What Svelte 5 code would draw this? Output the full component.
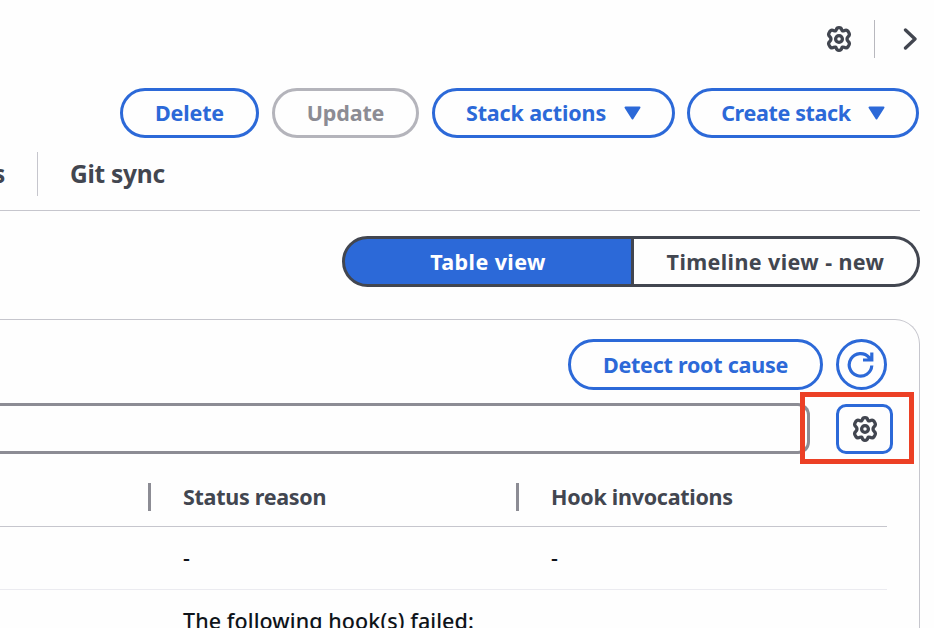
<script>
  const rows = [
    { reason: '-', hooks: '-' },
    { reason: 'The following hook(s) failed:', hooks: '' }
  ];

  let view = $state('table');
</script>

{#snippet gearIcon()}
  <svg class="gear" viewBox="0 0 26 26" aria-hidden="true">
    <path d="M10.300 3.800Q10.700 1.700 13 1.700T15.700 3.800Q16.200 5.500 18 4.700Q20.700 3.300 22 5.200L23 7Q24 9 22.300 10.500Q21 11.700 21 13T22.300 15.500Q24 17 23 19L22 20.800Q20.700 22.700 18 21.300Q16.200 20.500 15.700 22.200Q15.300 24.300 13 24.300T10.300 22.200Q9.800 20.500 8 21.300Q5.300 22.700 4 20.800L3 19Q2 17 3.700 15.500Q5 14.300 5 13T3.700 10.500Q2 9 3 7L4 5.200Q5.300 3.300 8 4.700Q9.800 5.500 10.300 3.800Z" />
    <circle cx="13" cy="13" r="3.400" />
  </svg>
{/snippet}

{#snippet caret()}
  <svg class="caret" viewBox="0 0 17 14" aria-hidden="true">
    <path d="M1.500 1.500h14l-7 11z" />
  </svg>
{/snippet}

<main>
  <header class="toolbar">
    <button class="icon-btn" aria-label="Preferences">{@render gearIcon()}</button>
    <span class="rule"></span>
    <button class="icon-btn next" aria-label="Next">
      <svg viewBox="0 0 14 22" aria-hidden="true"><path d="M2.500 2l9.500 9-9.500 9" /></svg>
    </button>
  </header>

  <div class="actions">
    <button class="btn delete">Delete</button>
    <button class="btn update" disabled>Update</button>
    <button class="btn stack"><span>Stack actions</span>{@render caret()}</button>
    <button class="btn create"><span>Create stack</span>{@render caret()}</button>
  </div>

  <nav class="tabs">
    <a class="prev-tab" href="#events">s</a>
    <a class="git" href="#git">Git sync</a>
  </nav>

  <div class="segments">
    <button class:active={view === 'table'} onclick={() => (view = 'table')}>Table view</button>
    <button class:active={view === 'timeline'} onclick={() => (view = 'timeline')}>
      Timeline view - new
    </button>
  </div>

  <section class="panel">
    <div class="panel-head">
      <button class="btn detect">Detect root cause</button>
      <button class="btn refresh" aria-label="Refresh">
        <svg viewBox="0 0 28 28" aria-hidden="true">
          <path d="M24.800 14.500A11.300 11.300 0 1 1 22 6.400L24.500 9M24.800 1.500V9H16" />
        </svg>
      </button>
    </div>

    <div class="filter-row">
      <input class="filter" aria-label="Search events" />
      <button class="settings" aria-label="Table settings">{@render gearIcon()}</button>
      <span class="highlight"></span>
    </div>

    <div class="table">
      <div class="row head">
        <span class="lead"></span>
        <span class="cell">Status reason</span>
        <span class="cell hooks">Hook invocations</span>
      </div>
      {#each rows as row}
        <div class="row">
          <span class="lead"></span>
          <span class="cell">{row.reason}</span>
          <span class="cell">{row.hooks}</span>
        </div>
      {/each}
    </div>
  </section>
</main>

<style>
  :global(body) {
    background: #fff;
    overflow: hidden;
  }

  main {
    --blue: #2c69d8;
    --dark: #424650;
    --grey: #8c8c94;
    --line: #c6c6cd;
    box-sizing: border-box;
    width: 934px;
    height: 628px;
    padding-right: 14px;
    overflow: hidden;
    background: #fefefe;
    color: #0f141a;
    font: 21.5px/28px 'Noto Sans', 'Open Sans', sans-serif;
  }
  main * { box-sizing: border-box; }

  button {
    padding: 0;
    background: none;
    color: inherit;
    font: inherit;
  }
  svg {
    display: block;
    flex: none;
    fill: none;
    stroke: currentColor;
    stroke-linejoin: round;
  }
  .gear { width: 26px; height: 26px; stroke-width: 3.300; }

  /* Top bar */
  .toolbar {
    display: flex;
    justify-content: flex-end;
    align-items: center;
    height: 88px;
    padding: 0 3px 10px 0;
    color: var(--dark);
  }
  .icon-btn { border: 0; }
  .rule {
    width: 1px;
    height: 38px;
    margin: 0 28px 0 22px;
    background: #b8b8be;
  }
  .next svg { width: 14px; height: 22px; stroke-width: 3.300; stroke-linecap: round; }

  /* Buttons */
  .actions {
    display: flex;
    justify-content: flex-end;
    padding-right: 1px;
    gap: 13px;
  }
  .btn {
    display: flex;
    justify-content: center;
    align-items: center;
    height: 50px;
    border: 3px solid var(--blue);
    border-radius: 25px;
    color: var(--blue);
    font-weight: 700;
    letter-spacing: -0.15px;
    white-space: nowrap;
  }
  .delete { width: 139px; }
  .update { width: 147px; border-color: #b4b4bb; color: var(--grey); }
  .stack { width: 243px; gap: 18px; }
  .create { width: 232px; margin-left: -1px; gap: 17px; letter-spacing: -0.350px; }
  .caret {
    width: 17px;
    height: 14px;
    fill: currentColor;
    stroke-width: 2;
  }

  /* Tabs */
  .tabs {
    display: flex;
    align-items: center;
    height: 73px;
    border-bottom: 1px solid var(--line);
    font-size: 24.500px;
    font-weight: 700;
    letter-spacing: -0.250px;
  }
  .tabs a { color: var(--dark); text-decoration: none; }
  .prev-tab {
    display: flex;
    justify-content: flex-end;
    align-items: center;
    width: 38px;
    height: 44px;
    padding-right: 32px;
    border-right: 1px solid var(--line);
  }
  .git { padding-left: 32px; }

  /* View switch */
  .segments {
    display: flex;
    justify-content: flex-end;
    margin: 25px 0 32px;
  }
  .segments button {
    width: 292px;
    height: 51px;
    border: 3px solid var(--dark);
    border-radius: 26px 0 0 26px;
    color: var(--dark);
    font-weight: 700;
    letter-spacing: 0.400px;
  }
  .segments button + button {
    width: 286px;
    border-left: 0;
    border-radius: 0 26px 26px 0;
  }
  .segments button.active { background: var(--blue); color: #fff; }

  /* Events panel */
  .panel {
    height: 400px;
    border: 1px solid var(--line);
    border-left: 0;
    border-top-right-radius: 25px;
    padding: 19px 32px 0 0;
  }
  .panel-head { display: flex; justify-content: flex-end; gap: 13px; }
  .panel-head .btn { height: 51px; border-radius: 26px; }
  .detect { width: 255px; letter-spacing: -0.250px; }
  .refresh { width: 51px; }
  .refresh svg {
    width: 28px;
    height: 28px;
    margin-right: 1px;
    stroke-width: 3.200;
    stroke-linejoin: miter;
  }

  .filter-row {
    position: relative;
    display: flex;
    gap: 26px;
    margin: 13px -6px 0 0;
  }
  .filter {
    flex: 1;
    min-width: 0;
    height: 51px;
    border: 3px solid var(--grey);
    border-left: 0;
    border-radius: 0 12px 12px 0;
    background: none;
  }
  .settings {
    display: grid;
    place-items: center;
    width: 57px;
    height: 50px;
    margin-top: 1px;
    border: 3px solid var(--blue);
    border-radius: 10px;
    color: var(--dark);
  }
  .highlight {
    position: absolute;
    top: -11px;
    right: -21px;
    width: 114px;
    height: 72px;
    border: 5px solid #ec4025;
    pointer-events: none;
  }

  /* Table */
  .row {
    display: grid;
    grid-template-columns: 149px 368px 1fr;
    align-items: center;
    height: 63px;
    padding-bottom: 1px;
    border-bottom: 1px solid #ebebf0;
    font-weight: 500;
    letter-spacing: 0.080px;
  }
  .row.head {
    height: 73px;
    padding: 13px 0 0;
    border-color: var(--line);
    color: var(--dark);
    font-weight: 700;
    letter-spacing: -0.280px;
  }
  .cell { padding-left: 34px; white-space: nowrap; }
  .head .cell { margin-left: -1px; padding-left: 32px; border-left: 3px solid var(--grey); }
</style>
